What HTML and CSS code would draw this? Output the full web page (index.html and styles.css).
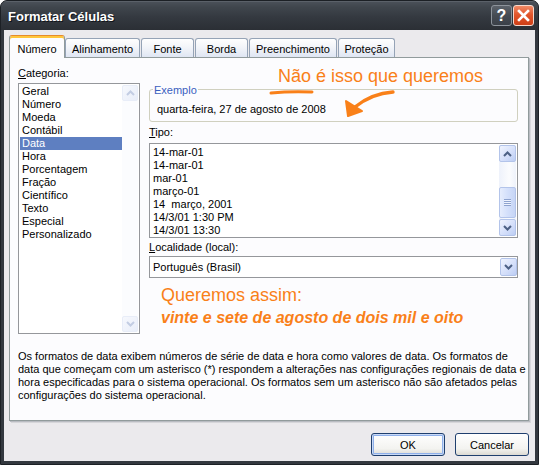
FILE: index.html
```html
<!DOCTYPE html>
<html lang="pt-BR">
<head>
<meta charset="utf-8">
<title>Formatar Células</title>
<link rel="stylesheet" href="styles.css">
</head>
<body>
<div class="window">
  <div class="titlebar">
    <span class="title">Formatar Células</span>
    <div class="caption-buttons">
      <span class="cap-btn help">?</span>
      <span class="cap-btn close"><svg width="19" height="19" viewBox="0 0 19 19"><path d="M5 5 L14 14 M14 5 L5 14" stroke="#fff" stroke-width="2.6" stroke-linecap="square" fill="none"/></svg></span>
    </div>
  </div>
  <div class="client">
    <div class="tabs">
      <div class="tab active t-num">Número</div>
      <div class="tab t-ali">Alinhamento</div>
      <div class="tab t-fon">Fonte</div>
      <div class="tab t-bor">Borda</div>
      <div class="tab t-pre">Preenchimento</div>
      <div class="tab t-pro">Proteção</div>
    </div>
    <div class="panel">
      <div class="cols">
        <div class="col-left">
          <div class="label"><u>C</u>ategoria:</div>
          <div class="listbox cat">
            <ul class="items">
              <li>Geral</li>
              <li>Número</li>
              <li>Moeda</li>
              <li>Contábil</li>
              <li class="selected">Data</li>
              <li>Hora</li>
              <li>Porcentagem</li>
              <li>Fração</li>
              <li>Científico</li>
              <li>Texto</li>
              <li>Especial</li>
              <li>Personalizado</li>
            </ul>
            <div class="vscroll disabled">
              <span class="sb-btn"><svg width="9" height="6" viewBox="0 0 9 6"><path d="M1 5 L4.5 1.5 L8 5" fill="none" stroke="#c3cde3" stroke-width="2"/></svg></span>
              <span class="sb-track"></span>
              <span class="sb-btn"><svg width="9" height="6" viewBox="0 0 9 6"><path d="M1 1 L4.5 4.5 L8 1" fill="none" stroke="#c3cde3" stroke-width="2"/></svg></span>
            </div>
          </div>
        </div>
        <div class="col-right">
          <div class="group">
            <span class="legend">Exemplo</span>
            <div class="sample">quarta-feira, 27 de agosto de 2008</div>
          </div>
          <div class="label tipo-label"><u>T</u>ipo:</div>
          <div class="listbox tipo">
            <ul class="items">
              <li>14-mar-01</li>
              <li>14-mar-01</li>
              <li>mar-01</li>
              <li>março-01</li>
              <li>14  março, 2001</li>
              <li>14/3/01 1:30 PM</li>
              <li>14/3/01 13:30</li>
            </ul>
            <div class="vscroll">
              <span class="sb-btn"><svg width="9" height="6" viewBox="0 0 9 6"><path d="M1 5 L4.5 1.5 L8 5" fill="none" stroke="#4d6185" stroke-width="2"/></svg></span>
              <span class="sb-track">
                <span class="sb-thumb"><span class="grip"></span></span>
              </span>
              <span class="sb-btn"><svg width="9" height="6" viewBox="0 0 9 6"><path d="M1 1 L4.5 4.5 L8 1" fill="none" stroke="#4d6185" stroke-width="2"/></svg></span>
            </div>
          </div>
          <div class="label loc-label"><u>L</u>ocalidade (local):</div>
          <div class="combo">
            <span class="combo-text">Português (Brasil)</span>
            <span class="sb-btn dd-btn"><svg width="9" height="6" viewBox="0 0 9 6"><path d="M1 1 L4.5 4.5 L8 1" fill="none" stroke="#4d6185" stroke-width="2"/></svg></span>
          </div>
          <div class="note-big">Queremos assim:</div>
          <div class="note-em">vinte e sete de agosto de dois mil e oito</div>
        </div>
      </div>
      <p class="desc">Os formatos de data exibem números de série de data e hora como valores de data. Os formatos de<br>data que começam com um asterisco (*) respondem a alterações nas configurações regionais de data e<br>hora especificadas para o sistema operacional. Os formatos sem um asterisco não são afetados pelas<br>configurações do sistema operacional.</p>
    </div>
    <div class="buttons">
      <button class="btn default">OK</button>
      <button class="btn">Cancelar</button>
    </div>
  </div>
  <div class="annotation">Não é isso que queremos</div>
  <svg class="marks" width="539" height="465" viewBox="0 0 539 465">
    <path d="M271 93 Q291 91 312 92" fill="none" stroke="#f98019" stroke-width="3" stroke-linecap="round"/>
    <path d="M393 92 C379 93 366 98 355 107" fill="none" stroke="#f98019" stroke-width="3.4" stroke-linecap="round"/>
    <path d="M346 101 L348 116 L362 111 Z" fill="#f98019" stroke="#f98019" stroke-width="2" stroke-linejoin="round"/>
  </svg>
</div>
</body>
</html>
```

FILE: styles.css
```css
* { box-sizing: border-box; }
html, body { margin: 0; padding: 0; }
body {
  width: 539px;
  height: 465px;
  overflow: hidden;
  background: #ffffff;
  font-family: "Liberation Sans", Arial, sans-serif;
  font-size: 11px;
  color: #000;
}
ul { list-style: none; margin: 0; padding: 0; }
p { margin: 0; }

.window {
  position: relative;
  width: 539px;
  height: 465px;
  display: flex;
  flex-direction: column;
  background: #33383f;
  border: 1px solid #1c2025;
  border-radius: 7px 7px 0 0;
}

.titlebar {
  height: 29px;
  flex: none;
  display: flex;
  align-items: flex-start;
  padding: 0 4px 0 7px;
  border-radius: 6px 6px 0 0;
  background: linear-gradient(#6c727a 0, #4a5058 1px, #40464d 6px, #343940 16px, #2b2f35 29px);
}
.title {
  flex: 1;
  padding-top: 8px;
  line-height: 15px;
  color: #fff;
  font-weight: bold;
  font-size: 13px;
  text-shadow: 1px 1px 0 #10141a;
}
.caption-buttons {
  display: flex;
  gap: 1px;
  margin-top: 4px;
}
.cap-btn {
  width: 21px;
  height: 21px;
  border-radius: 3px;
  display: flex;
  align-items: center;
  justify-content: center;
}
.help {
  background: linear-gradient(#5d636b, #454b53 50%, #3b4048);
  border: 1px solid #8d939b;
  color: #fff;
  font-weight: bold;
  font-size: 16px;
  line-height: 19px;
}
.close {
  background: linear-gradient(#f08a66, #e2562c 45%, #cf3f16);
  border: 1px solid #f6d8cc;
}

.client {
  flex: 1;
  margin: 0 3px 3px;
  background: #ebeaed;
  padding: 5px 6px 0 5px;
  display: flex;
  flex-direction: column;
}

.tabs {
  display: flex;
  align-items: flex-end;
  height: 22px;
}
.tab {
  height: 19px;
  margin-right: 1px;
  border: 1px solid #95a3b6;
  border-bottom: none;
  border-radius: 3px 3px 0 0;
  background: linear-gradient(#fefefe, #f3f5f9 45%, #dfe6f3);
  display: flex;
  align-items: center;
  justify-content: center;
  padding-top: 1px;
  white-space: nowrap;
}
.tab.active {
  position: relative;
  z-index: 1;
  height: 23px;
  margin-bottom: -1px;
  margin-right: 0;
  background: #fcfcfe;
  border-color: #919b9c;
  border-top: 1px solid #e68b2c;
  box-shadow: inset 0 2px 0 #ffc73c;
  padding-top: 4px;
}
.t-num { width: 56px; }
.t-ali { width: 75px; }
.t-fon { width: 53px; }
.t-bor { width: 53px; }
.t-pre { width: 88px; }
.t-pro { width: 57px; }

.panel {
  height: 364px;
  border: 1px solid #919b9c;
  background: #fcfcfe;
  padding: 9px 10px 0 8px;
  box-shadow: 1px 1px 0 #b9bcc2, 2px 2px 0 #d6d6da;
}
.cols {
  display: grid;
  grid-template-columns: 122px 369px;
  column-gap: 9px;
}

.label { line-height: 13px; white-space: nowrap; }

.listbox {
  display: flex;
  border: 1px solid #95979b;
  background: #fff;
  padding: 1px;
}
.items { flex: 1; overflow: hidden; }
.items li {
  height: 13px;
  line-height: 13px;
  padding-left: 2px;
  white-space: pre;
}
.items li.selected { background: #5e7fc1; color: #fff; }

.cat { margin-top: 3px; height: 251px; }
.tipo { margin-top: 4px; height: 95px; }
.tipo .items { padding-top: 1px; }

.vscroll {
  width: 16px;
  display: flex;
  flex-direction: column;
  background: linear-gradient(90deg, #eef2fb, #fbfcfe 60%, #eef2fb);
}
.tipo .vscroll { width: 17px; }
.sb-btn {
  flex: none;
  height: 17px;
  border: 1px solid #b3c4ea;
  border-radius: 2px;
  background: linear-gradient(135deg, #f0f4fe, #d3defa 60%, #bccdf4);
  display: flex;
  align-items: center;
  justify-content: center;
}
.vscroll.disabled { background: #fbfcfe; }
.vscroll.disabled .sb-btn {
  height: 16px;
  border-color: #e8edf8;
  background: linear-gradient(135deg, #f6f8fd, #e9eef9);
}
.sb-track { flex: 1; position: relative; display: flex; flex-direction: column; }
.sb-thumb {
  margin-top: 25px;
  height: 31px;
  border: 1px solid #b3c4ea;
  border-radius: 2px;
  background: linear-gradient(90deg, #e6edfd, #d4e0fb 50%, #c6d5f6);
  display: flex;
  align-items: center;
  justify-content: center;
}
.grip {
  width: 7px;
  height: 7px;
  background: repeating-linear-gradient(#8ea3cf 0 1px, #eef3fe 1px 2px);
}

.group {
  position: relative;
  margin-top: 22px;
  height: 33px;
  border: 1px solid #d0d0bf;
  border-radius: 3px;
  padding: 13px 0 0 7px;
}
.legend {
  position: absolute;
  left: 3px;
  top: -6px;
  padding: 0 1px;
  line-height: 13px;
  background: #fcfcfe;
  color: #3a5fbe;
}
.sample { line-height: 13px; }

.tipo-label { margin-top: 4px; }
.loc-label { margin-top: 3px; }

.combo {
  margin-top: 2px;
  height: 22px;
  border: 1px solid #95979b;
  background: #fff;
  padding: 1px 0 1px 3px;
  display: flex;
  align-items: center;
}
.combo-text { flex: 1; line-height: 13px; }
.dd-btn { width: 17px; height: 18px; }

.note-big {
  margin-top: 7px;
  padding-left: 12px;
  font-size: 18px;
  line-height: 21px;
  color: #f98019;
}
.note-em {
  margin-top: 3px;
  padding-left: 12px;
  font-size: 16px;
  line-height: 18px;
  font-weight: bold;
  font-style: italic;
  color: #f98019;
}

.desc {
  margin-top: 16px;
  line-height: 13px;
  white-space: nowrap;
}

.buttons {
  display: flex;
  justify-content: flex-end;
  gap: 10px;
  margin-top: 12px;
}
.btn {
  width: 74px;
  height: 23px;
  padding: 0;
  font: inherit;
  color: #000;
  border: 1px solid #1f3f6e;
  border-radius: 3px;
  background: linear-gradient(#ffffff, #f3f3f0 70%, #dcdad3);
}
.btn.default {
  box-shadow: inset 0 0 0 1px #c9daf7, inset 0 0 0 2px #8fb0ea;
}

.annotation {
  position: absolute;
  left: 277px;
  top: 65px;
  font-size: 18px;
  line-height: 21px;
  color: #f98019;
  white-space: nowrap;
}
.marks {
  position: absolute;
  left: -1px;
  top: -1px;
  pointer-events: none;
}
```
